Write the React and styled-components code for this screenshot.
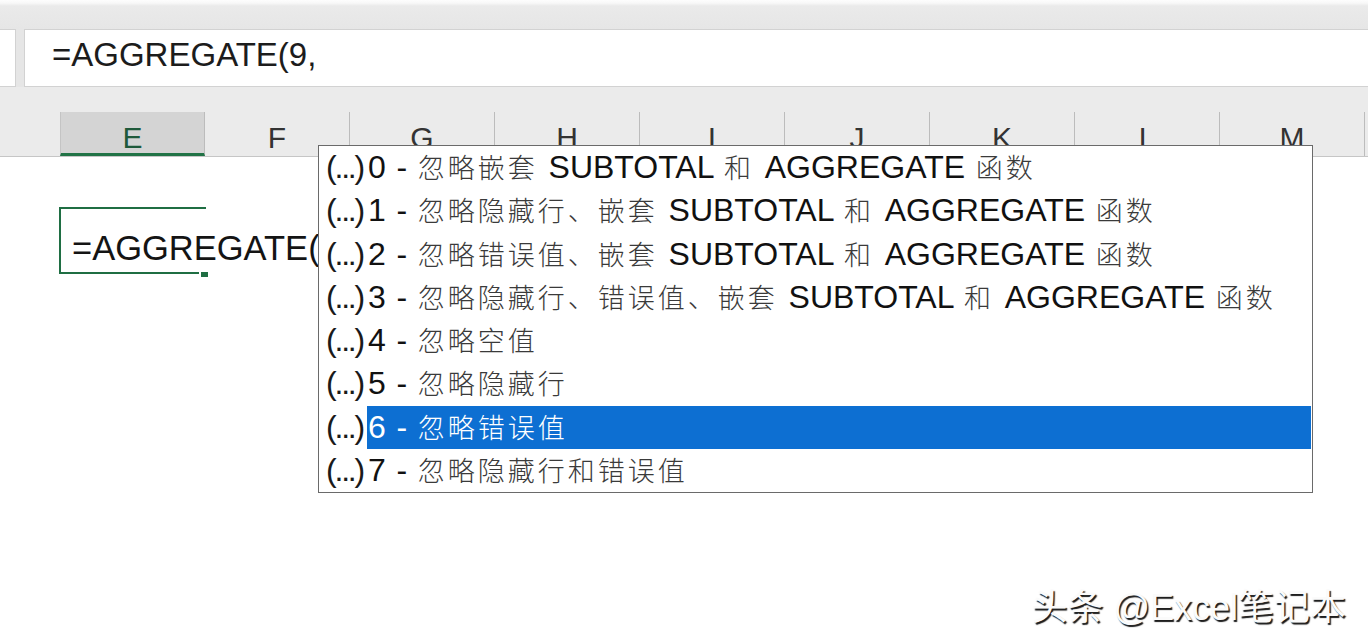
import React from 'react';
import styled, { createGlobalStyle } from 'styled-components';

const Global = createGlobalStyle`
  html, body { margin: 0; padding: 0; background: #fff; }
  body { font-family: "Liberation Sans", Arial, sans-serif; }
`;

const Page = styled.div`
  position: relative;
  width: 1368px;
  height: 644px;
  overflow: hidden;
  background: #fff;
  display: flex;
  flex-direction: column;
`;

const TitleStrip = styled.div`
  flex: 0 0 29px;
  background: linear-gradient(#fdfdfd 0, #f8f8f8 3px, #eaeaea 6px, #e6e6e6 100%);
`;

const FormulaBar = styled.div`
  flex: 0 0 58px;
  display: flex;
  gap: 8px;
  background: #e6e6e6;
`;

const NameBox = styled.div`
  width: 16px;
  box-sizing: border-box;
  background: #fff;
  border: 1px solid #d2d2d2;
  border-left: none;
`;

const FormulaInput = styled.div`
  flex: 1;
  box-sizing: border-box;
  background: #fff;
  border: 1px solid #d2d2d2;
  border-right: none;
  padding: 5px 0 0 27px;
  font-size: 33px;
  line-height: 40px;
  color: #1c1c1c;
  white-space: nowrap;
`;

const HeaderBar = styled.div`
  flex: 0 0 70px;
  box-sizing: border-box;
  display: flex;
  align-items: flex-end;
  padding-left: 60px;
  background: #ebebeb;
  border-bottom: 1px solid #c6c6c6;
`;

const HeaderCell = styled.div`
  flex: 0 0 145px;
  height: 44px;
  box-sizing: border-box;
  display: flex;
  align-items: center;
  justify-content: center;
  padding-top: ${p => (p.$active ? '10px' : '8px')};
  font-size: 30px;
  color: ${p => (p.$active ? '#1f5a3b' : '#333')};
  background: ${p => (p.$active ? '#d4d4d4' : 'transparent')};
  border-right: 1px solid #bcbcbc;
  border-left: ${p => (p.$active ? '1px solid #c4c4c4' : 'none')};
  border-bottom: ${p => (p.$active ? '3px solid #217346' : 'none')};
`;

const Sheet = styled.div`
  flex: 1;
  padding: 50px 0 0 59px;
`;

const ActiveCell = styled.div`
  position: relative;
  width: 147px;
  height: 67px;
  box-sizing: border-box;
  border: 2px solid #1f6e43;
  border-right: none;
  padding: 19px 0 0 11px;
  font-size: 34.5px;
  line-height: 40px;
  color: #141414;
  white-space: nowrap;

  &::after {
    content: '';
    position: absolute;
    right: -2px;
    bottom: -5px;
    width: 7px;
    height: 5px;
    background: #1f6e43;
    border-left: 2px solid #fff;
  }
`;

const Dropdown = styled.ul`
  position: absolute;
  left: 318px;
  top: 145px;
  width: 995px;
  height: 348px;
  box-sizing: border-box;
  margin: 0;
  padding: 0;
  list-style: none;
  background: #fff;
  border: 1px solid #6a6a6a;
`;

const Row = styled.li`
  display: flex;
  height: 43.3px;
  padding-left: 7px;
  margin-right: 1px;
  font-size: 32px;
  line-height: 43.3px;
  word-spacing: 1.8px;
  white-space: nowrap;
  color: #111;
`;

const Prefix = styled.span`
  flex: 0 0 41px;
  letter-spacing: -2.2px;
  color: #1a1a1a;
`;

const Label = styled.span`
  flex: 1;
  padding-left: 1px;
  background: ${p => (p.$selected ? '#0d6fd2' : 'transparent')};
  color: ${p => (p.$selected ? '#fff' : '#111')};
`;

const Han = styled.span`
  font-family: "Noto Sans CJK SC", "Noto Sans CJK JP", sans-serif;
  font-size: 27px;
  font-weight: 300;
  letter-spacing: 3px;
  line-height: 1;
  color: ${p => (p.$selected ? '#fff' : '#3a3a3a')};
`;

const Watermark = styled.div`
  position: absolute;
  right: 22px;
  top: 586px;
  font-family: "Liberation Sans", "Noto Sans CJK SC", sans-serif;
  font-size: 36px;
  line-height: 1;
  color: #fbfbfb;
  text-shadow: 1.5px 1.5px 1px #1a1a1a;
  white-space: nowrap;
`;

const WmHan = styled.span`
  font-family: "Noto Sans CJK SC", sans-serif;
`;

const columns = ['E', 'F', 'G', 'H', 'I', 'J', 'K', 'L', 'M'];

const options = [
  '0 - 忽略嵌套 SUBTOTAL 和 AGGREGATE 函数',
  '1 - 忽略隐藏行、嵌套 SUBTOTAL 和 AGGREGATE 函数',
  '2 - 忽略错误值、嵌套 SUBTOTAL 和 AGGREGATE 函数',
  '3 - 忽略隐藏行、错误值、嵌套 SUBTOTAL 和 AGGREGATE 函数',
  '4 - 忽略空值',
  '5 - 忽略隐藏行',
  '6 - 忽略错误值',
  '7 - 忽略隐藏行和错误值',
];

const HAN_RE = /([\u3000-\u303f\u4e00-\u9fff\uff00-\uffef]+)/;

function Mixed({ text, selected, Wrap = Han }) {
  return text.split(HAN_RE).map((part, i) =>
    HAN_RE.test(part) ? (
      <Wrap key={i} $selected={selected}>
        {part}
      </Wrap>
    ) : (
      <React.Fragment key={i}>{part}</React.Fragment>
    )
  );
}

export default function App() {
  const selectedIndex = 6;
  return (
    <>
      <Global />
      <Page>
        <TitleStrip />
        <FormulaBar>
          <NameBox />
          <FormulaInput>=AGGREGATE(9,</FormulaInput>
        </FormulaBar>
        <HeaderBar>
          {columns.map(c => (
            <HeaderCell key={c} $active={c === 'E'}>
              {c}
            </HeaderCell>
          ))}
        </HeaderBar>
        <Sheet>
          <ActiveCell>=AGGREGATE(</ActiveCell>
        </Sheet>
        <Dropdown>
          {options.map((o, i) => (
            <Row key={i}>
              <Prefix>(...)</Prefix>
              <Label $selected={i === selectedIndex}>
                <Mixed text={o} selected={i === selectedIndex} />
              </Label>
            </Row>
          ))}
        </Dropdown>
        <Watermark>
          <Mixed text="头条 @Excel笔记本" Wrap={WmHan} />
        </Watermark>
      </Page>
    </>
  );
}
